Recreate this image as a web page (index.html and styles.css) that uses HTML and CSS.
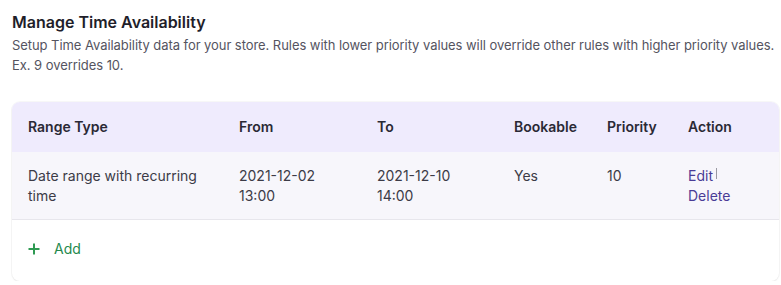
FILE: index.html
```html
<!DOCTYPE html>
<html lang="en">
<head>
<meta charset="utf-8">
<title>Manage Time Availability</title>
<link rel="stylesheet" href="styles.css">
</head>
<body>
<main class="page">
  <h1 class="title">Manage Time Availability</h1>
  <p class="desc">Setup Time Availability data for your store. Rules with lower priority values will override other rules with higher priority values. Ex. 9 overrides 10.</p>
  <section class="card">
    <table class="rules">
      <colgroup>
        <col class="c1"><col class="c2"><col class="c3"><col class="c4"><col class="c5"><col class="c6">
      </colgroup>
      <thead>
        <tr>
          <th>Range Type</th>
          <th>From</th>
          <th>To</th>
          <th>Bookable</th>
          <th>Priority</th>
          <th>Action</th>
        </tr>
      </thead>
      <tbody>
        <tr>
          <td>Date range with recurring time</td>
          <td>2021-12-02<br>13:00</td>
          <td>2021-12-10<br>14:00</td>
          <td>Yes</td>
          <td>10</td>
          <td><a class="act" href="#">Edit</a><span class="sep"></span><br><a class="act" href="#">Delete</a></td>
        </tr>
      </tbody>
    </table>
    <div class="add-row">
      <a class="add" href="#">
        <svg class="plus" width="12" height="12" viewBox="0 0 12 12" aria-hidden="true"><path d="M6 0.5V11.5M0.5 6H11.5" stroke="currentColor" stroke-width="2" fill="none"/></svg>
        <span>Add</span>
      </a>
    </div>
  </section>
</main>
</body>
</html>
```

FILE: styles.css
```css
* { box-sizing: border-box; }
html, body { margin: 0; padding: 0; background: #ffffff; }
body {
  font-family: Inter, "Noto Sans", "Liberation Sans", sans-serif;
  color: #3a3946;
}
.page { padding: 10px 0 0 12px; width: 781px; }
.title {
  margin: 0;
  font-size: 16px;
  line-height: 24px;
  font-weight: 600;
  color: #1f1e2a;
}
.desc {
  margin: 1px 0 0;
  font-size: 13px;
  line-height: 20px;
  letter-spacing: -0.06px;
  color: #55545f;
  width: 769px;
}
.card {
  margin-top: 27px;
  width: 767px;
  border-radius: 8px;
  background: #ffffff;
  box-shadow: 0 1px 2px rgba(0,0,0,0.06), 0 0 0 1px rgba(0,0,0,0.03);
  overflow: hidden;
}
.rules {
  width: 100%;
  border-collapse: collapse;
  table-layout: fixed;
  font-size: 14px;
  line-height: 20px;
}
.c1 { width: 211px; }
.c2 { width: 138px; }
.c3 { width: 137px; }
.c4 { width: 93px; }
.c5 { width: 81px; }
.c6 { width: 107px; }
.rules th {
  text-align: left;
  font-weight: 600;
  color: #2a2935;
  background: #efebfd;
  padding: 15px 16px;
  height: 50px;
}
.rules td {
  vertical-align: top;
  background: #f7f6fb;
  padding: 14px 16px 13px;
  border-bottom: 1px solid #e7e6ec;
  color: #3c3b47;
}
.act { color: #4a3c96; text-decoration: none; }
.sep {
  display: inline-block;
  width: 1px;
  height: 11px;
  background: #9b9aa3;
  margin-left: 3px;
  vertical-align: 2px;
}
.add-row { padding: 19px 16px 22px; }
.add {
  display: inline-flex;
  align-items: center;
  gap: 14px;
  color: #25894d;
  text-decoration: none;
  font-size: 14px;
  line-height: 20px;
}
.plus { color: #2e9a52; }
```
